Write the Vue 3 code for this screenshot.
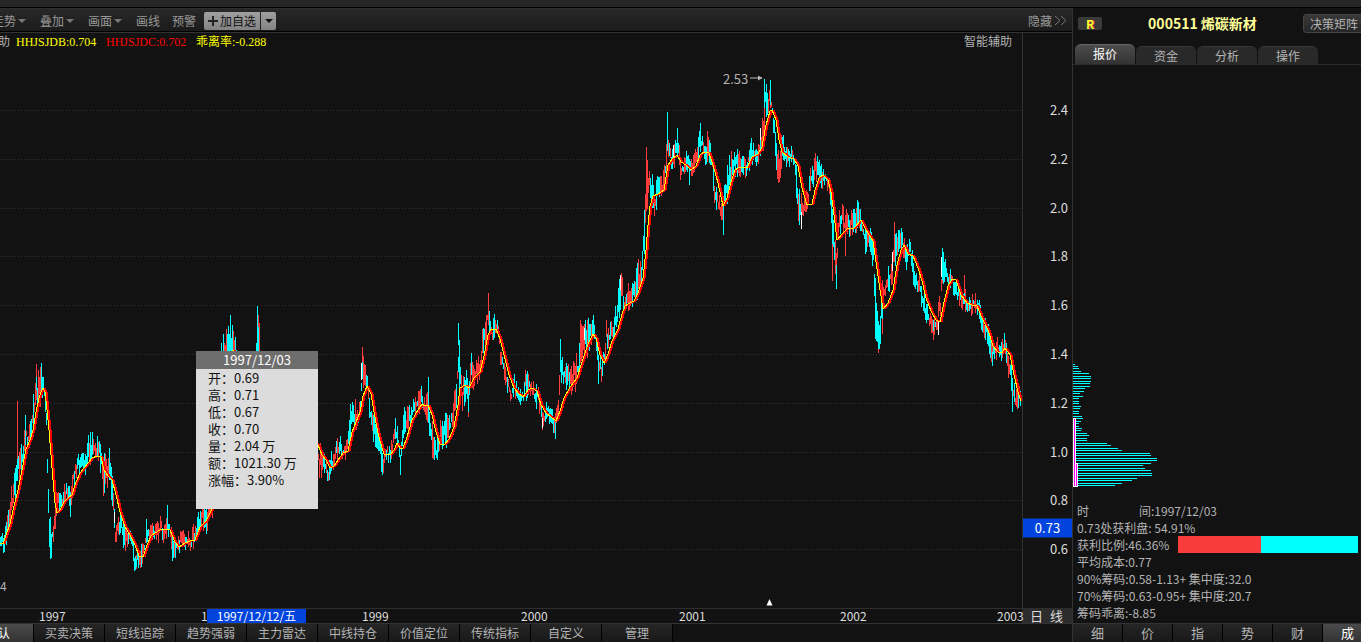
<script setup>
import { computed, ref } from 'vue'

// Plot space: x 0..1022, y 33..608
const PLOT = { width: 1022, top: 33, height: 575 }
const pctX = (x) => (x / PLOT.width) * 100 + '%'
const pctY = (y) => ((y - PLOT.top) / PLOT.height) * 100 + '%'

const ticks = [2.4, 2.2, 2.0, 1.8, 1.6, 1.4, 1.2, 1.0, 0.8, 0.6].map((value, i) => ({
  label: value.toFixed(1),
  y: Math.round(110 + i * 48.8),
}))

const years = [
  { label: '1997', x: 39 },
  { label: '1998', x: 201 },
  { label: '1999', x: 362 },
  { label: '2000', x: 521 },
  { label: '2001', x: 679 },
  { label: '2002', x: 840 },
  { label: '2003', x: 997 },
]

// Price range samples: x, high, low
const range = [
  [0, 532, 549], [3, 530, 552], [6, 508, 540], [9, 512, 528], [11, 486, 520], [13, 482, 507],
  [15, 470, 500], [18, 450, 485], [22, 448, 470], [25, 418, 445], [28, 430, 452], [30, 422, 440],
  [33, 398, 432], [36, 366, 412], [39, 375, 408], [41, 366, 400], [43, 376, 392], [45, 395, 410],
  [46, 410, 430], [47, 450, 485], [49, 515, 543], [50, 520, 558], [51, 530, 553], [53, 517, 538],
  [55, 503, 525], [58, 490, 510], [61, 495, 507], [66, 483, 500], [70, 485, 514], [73, 465, 490],
  [77, 457, 475], [80, 452, 467], [84, 458, 475], [88, 440, 463], [90, 434, 460], [95, 441, 456],
  [99, 440, 457], [103, 455, 503], [107, 460, 490], [109, 450, 475], [112, 470, 505],
  [115, 520, 545], [118, 520, 530], [121, 515, 530], [124, 530, 554], [128, 525, 545],
  [131, 533, 541], [134, 550, 567], [137, 552, 567], [141, 548, 563], [144, 540, 555],
  [146, 523, 541], [150, 525, 540], [153, 524, 536], [157, 525, 543], [160, 518, 533],
  [163, 527, 540], [167, 512, 532], [170, 525, 540], [173, 540, 558], [177, 541, 551],
  [182, 530, 545], [186, 532, 545], [190, 540, 550], [194, 524, 545], [198, 515, 535],
  [202, 503, 525], [206, 506, 530], [210, 495, 520], [216, 440, 500], [220, 350, 440],
  [223, 335, 370], [228, 326, 360], [231, 322, 360], [234, 338, 365], [237, 347, 370],
  [240, 360, 380], [255, 356, 380], [257, 312, 370], [259, 325, 370], [261, 352, 380],
  [275, 390, 430], [289, 470, 506], [305, 440, 480], [318, 440, 470], [320, 445, 484],
  [322, 455, 468], [325, 460, 472], [328, 465, 483], [331, 455, 475], [334, 447, 466],
  [337, 440, 460], [339, 434, 455], [342, 450, 458], [346, 445, 457], [350, 408, 440],
  [352, 404, 430], [355, 403, 426], [358, 410, 425], [360, 393, 412], [362, 352, 395],
  [364, 366, 382], [367, 378, 395], [370, 400, 425], [374, 415, 442], [378, 435, 450],
  [381, 447, 470], [383, 463, 474], [386, 441, 460], [389, 445, 463], [392, 440, 455],
  [395, 420, 445], [398, 437, 450], [400, 453, 473], [402, 428, 445], [404, 410, 430],
  [406, 408, 433], [410, 405, 428], [414, 400, 415], [418, 390, 410], [421, 388, 409],
  [425, 400, 423], [428, 382, 420], [430, 405, 445], [433, 435, 460], [436, 445, 458],
  [440, 422, 445], [445, 413, 448], [450, 415, 435], [455, 378, 428], [458, 330, 395],
  [460, 350, 390], [462, 385, 407], [466, 365, 400], [468, 383, 410], [471, 352, 385],
  [474, 362, 388], [478, 360, 382], [482, 332, 370], [485, 320, 346], [488, 298, 325],
  [490, 308, 340], [492, 326, 344], [495, 312, 330], [498, 325, 337], [500, 349, 362],
  [503, 360, 373], [506, 370, 385], [509, 380, 395], [511, 385, 404], [514, 377, 395],
  [518, 390, 402], [523, 391, 402], [525, 372, 400], [528, 375, 392], [531, 380, 391],
  [534, 388, 403], [538, 387, 405], [542, 413, 429], [545, 411, 424], [548, 398, 415],
  [551, 412, 430], [555, 418, 436], [558, 400, 420], [560, 345, 375], [563, 364, 390],
  [567, 365, 387], [571, 363, 394], [575, 355, 387], [578, 362, 384], [580, 325, 368],
  [583, 330, 363], [586, 318, 355], [589, 325, 350], [592, 311, 335], [595, 325, 345],
  [598, 350, 380], [601, 360, 378], [604, 346, 362], [606, 320, 350], [609, 325, 345],
  [612, 320, 343], [616, 305, 330], [620, 274, 312], [622, 280, 305], [624, 297, 312],
  [627, 284, 308], [630, 294, 309], [634, 280, 300], [638, 262, 294], [641, 265, 285],
  [643, 230, 270], [646, 155, 215], [649, 165, 190], [652, 172, 212], [654, 192, 220],
  [658, 172, 200], [662, 178, 195], [665, 160, 185], [667, 116, 172], [669, 142, 166],
  [672, 153, 173], [675, 142, 162], [677, 132, 156], [680, 158, 180], [683, 162, 173],
  [686, 142, 167], [689, 158, 182], [693, 150, 173], [696, 153, 165], [700, 126, 150],
  [702, 137, 152], [705, 142, 163], [708, 137, 158], [712, 155, 175], [714, 170, 208],
  [717, 190, 210], [720, 200, 218], [722, 205, 222], [726, 172, 205], [729, 152, 190],
  [733, 152, 172], [738, 155, 174], [742, 151, 170], [746, 163, 178], [750, 135, 165],
  [754, 146, 161], [757, 154, 165], [760, 132, 155], [763, 104, 150], [765, 84, 112],
  [768, 93, 117], [770, 84, 106], [773, 112, 132], [776, 140, 170], [778, 150, 184],
  [780, 150, 182], [782, 128, 152], [785, 145, 161], [788, 150, 165], [792, 149, 161],
  [795, 151, 180], [798, 180, 220], [801, 195, 226], [804, 198, 214], [808, 188, 208],
  [811, 163, 190], [815, 157, 180], [819, 162, 182], [822, 172, 190], [825, 170, 182],
  [829, 180, 196], [832, 210, 258], [834, 235, 265], [836, 250, 284], [838, 215, 245],
  [841, 204, 232], [845, 215, 238], [848, 211, 235], [852, 215, 231], [855, 210, 235],
  [857, 202, 224], [860, 207, 226], [862, 220, 232], [865, 233, 250], [869, 227, 246],
  [873, 237, 272], [875, 280, 335], [877, 310, 342], [879, 325, 350], [882, 276, 320],
  [885, 278, 298], [888, 269, 292], [892, 264, 284], [894, 226, 268], [897, 235, 252],
  [900, 229, 250], [903, 236, 258], [906, 248, 270], [910, 242, 256], [913, 258, 281],
  [916, 272, 286], [920, 278, 300], [924, 293, 326], [927, 303, 325], [930, 315, 330],
  [933, 322, 338], [937, 312, 330], [940, 290, 322], [942, 252, 282], [945, 264, 286],
  [949, 271, 286], [953, 275, 291], [957, 284, 302], [960, 294, 305], [964, 289, 307],
  [967, 300, 311], [970, 299, 312], [975, 297, 309], [978, 300, 312], [981, 311, 326],
  [985, 322, 336], [988, 325, 346], [991, 343, 364], [994, 343, 357], [997, 340, 355],
  [1000, 344, 361], [1003, 342, 352], [1005, 335, 352], [1007, 346, 368], [1010, 365, 384],
  [1013, 376, 408], [1015, 388, 408], [1018, 386, 404], [1021, 400, 412],
]

const spikes = [
  [17, 401, 475, 'up'], [36, 364, 400, 'up'], [41, 363, 390, 'down'], [33, 394, 430, 'down'],
  [25, 415, 445, 'down'], [50, 530, 559, 'down'], [70, 495, 516, 'up'], [90, 432, 460, 'down'],
  [109, 448, 480, 'down'], [114, 512, 523, 'flat'], [136, 555, 569, 'up'], [167, 505, 530, 'down'],
  [172, 545, 561, 'down'], [230, 315, 351, 'down'], [257, 306, 351, 'down'], [258, 315, 351, 'up'],
  [361, 363, 380, 'flat'], [362, 347, 372, 'up'], [400, 455, 475, 'down'], [428, 377, 420, 'down'],
  [458, 323, 345, 'down'], [468, 385, 417, 'up'], [488, 293, 325, 'up'], [555, 422, 439, 'down'],
  [560, 339, 372, 'down'], [542, 418, 428, 'flat'], [584, 328, 340, 'flat'],
  [620, 275, 290, 'flat'], [646, 147, 190, 'up'], [667, 112, 150, 'down'], [677, 128, 155, 'down'],
  [700, 123, 150, 'down'], [707, 131, 158, 'up'], [723, 205, 235, 'down'], [673, 145, 160, 'flat'],
  [760, 128, 140, 'flat'], [764, 79, 108, 'down'], [770, 80, 105, 'down'], [801, 212, 229, 'flat'],
  [832, 225, 281, 'up'], [836, 265, 289, 'down'], [845, 225, 256, 'up'], [857, 200, 222, 'down'],
  [878, 330, 353, 'up'], [882, 280, 334, 'up'], [892, 252, 271, 'flat'], [894, 222, 262, 'up'],
  [933, 320, 340, 'up'], [938, 322, 335, 'flat'], [941, 257, 277, 'flat'], [942, 248, 280, 'down'],
  [964, 275, 302, 'up'], [992, 352, 366, 'down'], [1004, 333, 350, 'down'], [1012, 380, 412, 'down'],
]

const seeded = (seed) => () => {
  seed = (seed * 1664525 + 1013904223) % 4294967296
  return seed / 4294967296
}

const bars = computed(() => {
  const rand = seeded(511)
  const out = { up: '', down: '', flat: '' }
  const add = (kind, x, hi, lo) => {
    out[kind] += `M${x}.5 ${Math.round(hi)}V${Math.round(lo)}`
  }
  let kind = 'up'
  for (let i = 0; i < range.length - 1; i++) {
    const [x0, h0, l0] = range[i]
    const [x1, h1, l1] = range[i + 1]
    for (let x = x0; x < x1; x++) {
      const t = (x - x0) / (x1 - x0)
      const hi = h0 + (h1 - h0) * t
      const lo = l0 + (l1 - l0) * t
      const slope = h1 + l1 - h0 - l0
      const pUp = slope < -4 ? 0.58 : slope > 4 ? 0.38 : 0.5
      if (rand() < 0.7) kind = rand() < pUp ? 'up' : 'down'
      const span = lo - hi
      const top = hi + rand() * (span * 0.5 + 5) - 5
      const bottom = lo - rand() * (span * 0.5 + 5) + 5
      add(kind, x, top, Math.max(bottom, top + 5))
    }
  }
  for (const [x, hi, lo, k] of spikes) add(k, x, hi, lo)
  return out
})

const average =
  '0,543 3,544 6,535 10,524 14,506 18,490 22,470 26,449 30,440 33,430 36,412 39,398 41,392 43,388 45,392 47,410 49,430 51,455 53,480 55,503 57,513 60,510 64,502 68,498 72,495 76,482 80,473 84,468 88,463 92,458 97,456 101,457 104,470 108,476 112,480 116,495 120,512 125,527 130,535 135,545 139,556 143,557 147,545 151,536 155,533 160,530 166,529 170,530 175,542 179,547 185,543 190,541 195,540 200,527 206,521 212,509 216,490 222,430 228,370 233,350 240,360 262,352 275,400 290,470 305,450 312,440 318,445 322,455 326,460 330,468 334,466 338,460 343,453 348,451 352,432 356,422 360,412 363,396 367,386 371,394 374,412 378,433 382,448 384,454 390,455 394,450 397,443 400,448 403,448 407,437 412,420 418,410 422,404 425,406 428,405 432,415 436,432 440,444 444,445 449,439 454,427 458,405 460,388 465,385 469,388 474,378 480,372 484,356 488,335 491,329 496,329 500,339 505,359 509,375 514,388 519,394 523,397 528,390 532,388 537,391 541,405 546,413 551,417 556,421 560,411 564,398 570,387 577,378 582,362 588,344 593,334 596,338 600,355 604,363 608,354 612,341 618,329 622,314 625,306 630,303 634,301 638,293 643,278 646,250 648,225 650,206 653,196 658,194 664,190 668,165 672,159 677,155 681,162 686,165 691,170 696,166 700,155 704,152 709,153 713,165 718,183 723,206 727,198 731,182 735,170 740,167 747,168 752,157 758,154 762,147 766,125 770,111 772,110 776,120 779,140 782,152 788,157 794,159 798,166 802,188 807,205 812,204 815,190 819,178 823,175 828,180 831,192 834,215 837,240 843,233 847,229 854,228 861,220 866,230 873,241 876,262 880,290 883,309 888,303 893,290 897,265 901,250 904,245 908,254 913,256 918,268 922,281 926,298 931,311 936,320 940,322 944,302 948,286 952,279 956,280 961,295 967,303 972,305 977,306 982,318 988,330 993,346 998,352 1002,353 1005,348 1010,355 1014,375 1018,392 1021,401'

const quote = [
  ['开', '0.69'],
  ['高', '0.71'],
  ['低', '0.67'],
  ['收', '0.70'],
  ['量', '2.04 万'],
  ['额', '1021.30 万'],
  ['涨幅', '3.90%'],
]

const chipWidths = [
  2, 5, 6, 8, 16, 18, 18, 18, 17, 17, 12, 11, 7, 10, 6, 6, 6, 8, 7, 6, 6, 9, 10, 8, 6, 6, 9, 8, 14,
  16, 14, 14, 34, 38, 45, 49, 77, 78, 84, 84, 78, 70, 72, 78, 79, 79, 64, 59, 49, 42,
]
const chips = chipWidths.map((w, i) => `M0 ${Math.floor(i * 2.48)}.5H${w}`).join('')

const profit = 46.36
const menus = [
  { label: '走势', arrow: true },
  { label: '叠加', arrow: true },
  { label: '画面', arrow: true },
  { label: '画线', arrow: false },
  { label: '预警', arrow: false },
]
const templates = ['默认', '买卖决策', '短线追踪', '趋势强弱', '主力雷达', '中线持仓', '价值定位', '传统指标', '自定义', '管理']
const template = ref('默认')
const sideTabs = ['报价', '资金', '分析', '操作']
const sideTab = ref('报价')
const detailTabs = ['细', '价', '指', '势', '财', '成']
const detailTab = ref('成')
</script>

<template>
  <div class="app">
    <div class="strip"></div>
    <main class="left">
      <div class="toolbar">
        <button v-for="m in menus" :key="m.label" class="menu" :class="{ drop: m.arrow }" type="button">
          {{ m.label }}<i v-if="m.arrow" class="caret"></i>
        </button>
        <div class="favorite">
          <button type="button" class="add">
            <svg width="10" height="10" viewBox="0 0 10 10"><path d="M5 0V10M0 5H10" stroke="#222" stroke-width="2" /></svg>加自选
          </button>
          <button type="button" class="more" aria-label="更多"><i class="caret dark"></i></button>
        </div>
        <button type="button" class="hide">
          隐藏<svg width="13" height="11" viewBox="0 0 13 11"><path d="M1 1L6 5.500L1 10M7 1L12 5.500L7 10" fill="none" stroke="#777" /></svg>
        </button>
      </div>

      <section class="chart">
        <div class="plot">
          <svg class="series" viewBox="0 33 1022 575" preserveAspectRatio="none" shape-rendering="crispEdges">
            <path v-for="t in ticks" :key="t.y" class="grid" :d="`M0 ${t.y}.5H1022`" />
            <path class="bar up" :d="bars.up" />
            <path class="bar down" :d="bars.down" />
            <path class="bar flat" :d="bars.flat" />
            <polyline class="slow" :points="average" transform="translate(2 0)" />
            <polyline class="slow" :points="average" transform="translate(1 0)" />
            <polyline class="fast" :points="average" />
          </svg>
          <div class="legend">
            <span>智能辅助</span>
            <span class="yellow">HHJSJDB:0.704</span>
            <span class="red">HHJSJDC:0.702</span>
            <span class="yellow">乖离率:-0.288</span>
            <span class="helper">智能辅助</span>
          </div>
          <div class="peak" :style="{ left: pctX(723), top: pctY(78) }">
            2.53<svg width="13" height="7" viewBox="0 0 13 7"><path d="M0 3.500H12" stroke="#bbb" /><path d="M8 1L12.500 3.500L8 6Z" fill="#bbb" /></svg>
          </div>
          <div class="low" :style="{ top: pctY(586) }">4</div>
          <svg class="marker" :style="{ left: pctX(766) }" width="7" height="7" viewBox="0 0 7 7"><path d="M3.500 0L6.500 6.500H.5Z" fill="#fff" /></svg>
          <div class="tip" :style="{ left: pctX(196), top: pctY(351) }">
            <div class="tip-head">1997/12/03</div>
            <dl>
              <div v-for="[k, v] in quote" :key="k"><dt>{{ k }}：</dt><dd>{{ v }}</dd></div>
            </dl>
          </div>
        </div>
        <div class="scale">
          <span v-for="t in ticks" :key="t.y" class="tick" :style="{ top: pctY(t.y) }">{{ t.label }}</span>
          <span class="cursor-price" :style="{ top: pctY(528) }">0.73</span>
        </div>
      </section>

      <div class="dates">
        <div class="timeline">
          <span v-for="y in years" :key="y.label" class="year" :style="{ left: pctX(y.x) }">{{ y.label }}</span>
          <span class="cursor-date" :style="{ left: pctX(207) }">1997/12/12/五</span>
        </div>
        <button type="button" class="period"><span>日</span><span>线</span></button>
      </div>

      <nav class="templates">
        <button v-for="t in templates" :key="t" type="button" :class="{ active: t === template }" @click="template = t">{{ t }}</button>
      </nav>
    </main>

    <aside class="side">
      <header class="stock">
        <span class="badge">R</span>
        <h1>000511 烯碳新材</h1>
        <button type="button" class="matrix">决策矩阵</button>
      </header>
      <nav class="side-tabs">
        <button v-for="t in sideTabs" :key="t" type="button" :class="{ active: t === sideTab }" @click="sideTab = t">{{ t }}</button>
      </nav>
      <div class="chip-area">
        <svg width="86" height="124" viewBox="0 0 86 124" shape-rendering="crispEdges">
          <path :d="chips" stroke="#00ffff" />
          <path d="M0 54H3V99H5V123H0Z" fill="#fff" />
          <path d="M1 55H2V122H1ZM3 100H4V122H3Z" fill="#ff00ff" />
        </svg>
      </div>
      <div class="info">
        <p><span class="spread"><span>时</span><span>间</span></span>:1997/12/03</p>
        <p>0.73处获利盘: 54.91%</p>
        <p class="ratio">
          <span>获利比例:{{ profit }}%</span>
          <span class="meter"><i :style="{ width: profit + '%' }"></i></span>
        </p>
        <p>平均成本:0.77</p>
        <p>90%筹码:0.58-1.13+ 集中度:32.0</p>
        <p>70%筹码:0.63-0.95+ 集中度:20.7</p>
        <p>筹码乖离:-8.85</p>
      </div>
      <nav class="detail-tabs">
        <button v-for="t in detailTabs" :key="t" type="button" :class="{ active: t === detailTab }" @click="detailTab = t">{{ t }}</button>
      </nav>
    </aside>
  </div>
</template>

<style>
body {
  background: #121212;
}
</style>

<style scoped>
.app {
  display: grid;
  grid-template: 8px minmax(0, 1fr) / minmax(0, 1fr) 289px;
  height: 100vh;
  overflow: hidden;
  background: #121212;
  color: #b4b4b4;
  font: 12px/17px "Noto Sans CJK SC", sans-serif;
}
button {
  padding: 0;
  border: 0;
  background: none;
  color: inherit;
  font: inherit;
  white-space: nowrap;
}
.strip {
  grid-column: 1 / -1;
  background: #262626;
  border-bottom: 1px solid #000;
  box-sizing: border-box;
}
.left {
  display: flex;
  flex-direction: column;
  min-width: 0;
}
.toolbar {
  flex: none;
  display: flex;
  align-items: center;
  box-sizing: border-box;
  height: 25px;
  padding-right: 5px;
  margin-left: -8px;
  background: linear-gradient(#282828, #1a1a1a);
  border-top: 1px solid #2e2e2e;
  border-bottom: 1px solid #333;
  box-shadow: inset 0 -1px #000;
  color: #999;
}
.menu {
  display: flex;
  align-items: center;
  gap: 2px;
  margin-right: 12px;
}
.menu.drop {
  margin-right: 14px;
}
.caret {
  border: 4px solid transparent;
  border-top-color: #777;
  border-bottom: 0;
}
.caret.dark {
  border-top-color: #111;
}
.favorite {
  display: flex;
  gap: 1px;
  margin-left: -4px;
  height: 18px;
}
.add,
.more {
  display: flex;
  align-items: center;
  justify-content: center;
  background: linear-gradient(#a0a0a0, #838383);
  color: #111;
}
.add {
  gap: 2px;
  padding: 0 4px;
  border-radius: 2px 0 0 2px;
}
.more {
  width: 15px;
  border-radius: 0 2px 2px 0;
}
.hide {
  display: flex;
  align-items: center;
  gap: 2px;
  margin-left: auto;
}
.chart {
  flex: 1;
  display: flex;
  min-height: 0;
}
.plot {
  position: relative;
  flex: 1;
  min-width: 0;
}
.series {
  position: absolute;
  width: 100%;
  height: 100%;
}
.grid {
  stroke: #333;
  stroke-dasharray: 1 2;
}
.bar {
  fill: none;
}
.up {
  stroke: #ff3c3c;
}
.down {
  stroke: #00ffff;
}
.flat {
  stroke: #fff;
}
.slow,
.fast {
  fill: none;
  stroke: #ff0000;
}
.fast {
  stroke: #ffff00;
}
.legend {
  position: relative;
  display: grid;
  grid-template-columns: 54px 90px 90px 1fr auto;
  margin-left: -38px;
  padding-right: 10px;
  font-family: "Liberation Serif", "Noto Sans CJK SC", serif;
  line-height: 18px;
}
.yellow {
  color: #ffff00;
}
.red {
  color: #ff0000;
}
.peak {
  position: absolute;
  display: flex;
  align-items: center;
  gap: 2px;
  font-size: 13px;
  transform: translateY(-50%);
}
.low {
  position: absolute;
  padding-bottom: 2px;
  transform: translateY(-50%);
}
.marker {
  position: absolute;
  bottom: 2px;
}
.tip {
  position: absolute;
  width: 122px;
  height: 158px;
  background: #dcdcdc;
  color: #111;
  font-size: 13px;
}
.tip-head {
  height: 18px;
  background: #6e6e6e;
  color: #fff;
  line-height: 17px;
  text-align: center;
}
.tip dl {
  margin: 0;
  padding-left: 12px;
}
.tip dl div {
  display: flex;
}
.tip dd {
  margin: 0;
}
.scale {
  position: relative;
  flex: none;
  width: 49px;
  border-left: 1px solid #333;
  color: #ddd;
  font-size: 13px;
}
.tick {
  position: absolute;
  right: 4px;
  padding-bottom: 2px;
  transform: translateY(-50%);
}
.cursor-price {
  position: absolute;
  width: 100%;
  padding-bottom: 1px;
  background: #0044dd;
  color: #fff;
  line-height: 18px;
  text-align: center;
  transform: translateY(-50%);
}
.dates {
  flex: none;
  display: flex;
  height: 14px;
  border-top: 1px solid #2e2e2e;
  border-bottom: 1px solid #333;
  color: #ddd;
  line-height: 14px;
}
.timeline {
  position: relative;
  z-index: 1;
  flex: 1;
}
.year,
.cursor-date {
  position: absolute;
  white-space: nowrap;
}
.cursor-date {
  width: 99px;
  background: #0044dd;
  color: #fff;
  text-align: center;
}
.period {
  display: flex;
  justify-content: space-between;
  width: 50px;
  padding: 0 9px 0 8px;
  box-sizing: border-box;
  background: #2c2c2c;
  font-size: 13px;
  line-height: 14px;
}
.templates {
  flex: none;
  display: flex;
  height: 18px;
  margin-left: -37px;
}
.templates button {
  flex: 0 0 71px;
}
.templates button,
.detail-tabs button {
  background: linear-gradient(#262626, #181818);
  border-right: 1px solid #000;
  line-height: 16px;
}
.templates .active,
.detail-tabs .active {
  background: linear-gradient(#4a4a4a, #333);
  color: #fff;
}
.side {
  display: flex;
  flex-direction: column;
  min-width: 0;
  border-left: 1px solid #333;
  overflow: hidden;
}
.stock {
  flex: none;
  position: relative;
  display: flex;
  align-items: center;
  justify-content: space-between;
  height: 30px;
  padding-left: 5px;
}
.badge {
  width: 24px;
  border-radius: 2px;
  background: #3a3a3a;
  color: #ffff33;
  font-weight: bold;
  line-height: 13px;
  text-align: center;
  text-shadow: 1px 0 #c33;
}
.stock h1 {
  margin: 0;
  color: #ffff99;
  font-size: 14px;
  line-height: 20px;
}
.matrix {
  height: 19px;
  margin-right: -4px;
  padding: 0 6px;
  border: 1px solid #444;
  border-radius: 3px;
  background: linear-gradient(#383838, #262626);
  line-height: 17px;
}
.side-tabs {
  flex: none;
  display: flex;
  align-items: flex-end;
  gap: 1px;
  height: 26px;
  padding-left: 2px;
  border-bottom: 1px solid #2c2c2c;
}
.side-tabs button {
  width: 60px;
  height: 18px;
  padding-bottom: 2px;
  border-top: 1px solid #383838;
  border-radius: 6px 6px 0 0;
  background: #292929;
}
.side-tabs .active {
  height: 20px;
  border-top-color: #666;
  background: linear-gradient(#4c4c4c, #333);
  color: #fff;
}
.chip-area {
  flex: 1;
  display: flex;
  align-items: flex-end;
  min-height: 124px;
}
.info {
  flex: none;
  padding: 14px 3px 2px 4px;
}
.info p {
  margin: 0;
  white-space: pre;
}
.spread {
  display: inline-flex;
  justify-content: space-between;
  width: 74px;
}
.info .ratio {
  display: flex;
  justify-content: space-between;
}
.meter {
  display: flex;
  width: 180px;
  height: 17px;
  background: #00ffff;
}
.meter i {
  background: #f83c3c;
}
.detail-tabs {
  flex: none;
  display: flex;
  height: 18px;
  border-top: 1px solid #333;
}
.detail-tabs button {
  flex: 0 0 50px;
  font-size: 13px;
}
</style>
